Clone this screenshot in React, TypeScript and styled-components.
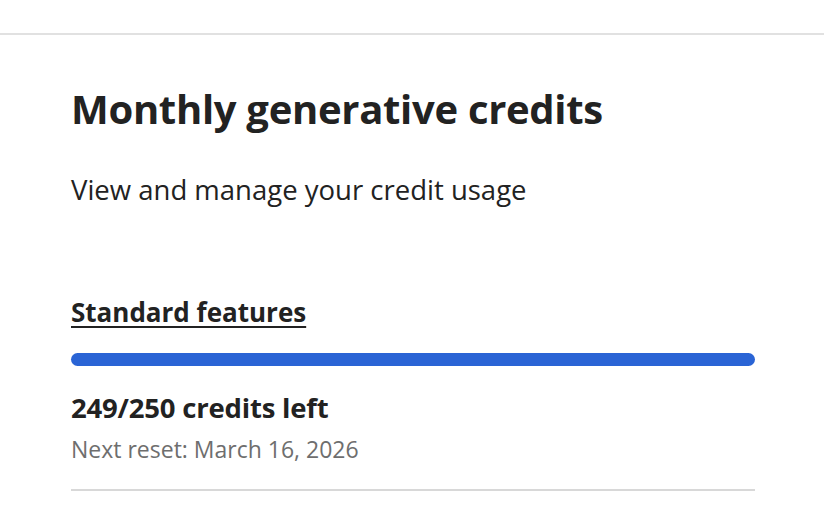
import styled, { createGlobalStyle } from 'styled-components';

const Global = createGlobalStyle`
  html, body {
    margin: 0;
    padding: 0;
    background: #ffffff;
  }
  body {
    font-family: 'Open Sans', 'Noto Sans', sans-serif;
    color: #222222;
  }
`;

const Page = styled.div`
  width: 824px;
  height: 509px;
  overflow: hidden;
  padding-top: 33px;
  box-sizing: border-box;
`;

const Panel = styled.section`
  border-top: 2px solid #e1e1e1;
  padding: 50px 69px 0 71px;
`;

const Title = styled.h1`
  margin: 0;
  font-size: 40px;
  line-height: 48px;
  font-weight: 700;
  letter-spacing: -0.3px;
  color: #222222;
`;

const Subtitle = styled.p`
  margin: 39px 0 0;
  font-size: 27.5px;
  line-height: 36px;
  font-weight: 400;
  color: #222222;
`;

const SectionLink = styled.a`
  display: inline-block;
  margin-top: 87px;
  font-size: 26px;
  line-height: 34px;
  font-weight: 700;
  color: #222222;
  text-decoration: underline;
  text-decoration-thickness: 2px;
  text-underline-offset: 4px;
`;

const Track = styled.div`
  margin-top: 24px;
  height: 13px;
  border-radius: 7px;
  background: transparent;
`;

const Fill = styled.div`
  height: 100%;
  border-radius: 7px;
  background: #2a64d5;
`;

const Credits = styled.div`
  margin-top: 26px;
  font-size: 27.5px;
  line-height: 32px;
  font-weight: 700;
  letter-spacing: -0.2px;
  color: #222222;
`;

const Reset = styled.div`
  margin-top: 10px;
  font-size: 23px;
  line-height: 30px;
  color: #6e6e6e;
`;

const Divider = styled.hr`
  margin: 25px 0 0;
  border: none;
  border-top: 2px solid #d8d8d8;
`;

export default function App() {
  const left = 249;
  const total = 250;
  const pct = Math.round((left / total) * 100);
  return (
    <Page>
      <Global />
      <Panel>
        <Title>Monthly generative credits</Title>
        <Subtitle>View and manage your credit usage</Subtitle>
        <SectionLink href="#">Standard features</SectionLink>
        <Track>
          <Fill style={{ width: `${pct}%` }} />
        </Track>
        <Credits>
          {left}/{total} credits left
        </Credits>
        <Reset>Next reset: March 16, 2026</Reset>
        <Divider />
      </Panel>
    </Page>
  );
}
